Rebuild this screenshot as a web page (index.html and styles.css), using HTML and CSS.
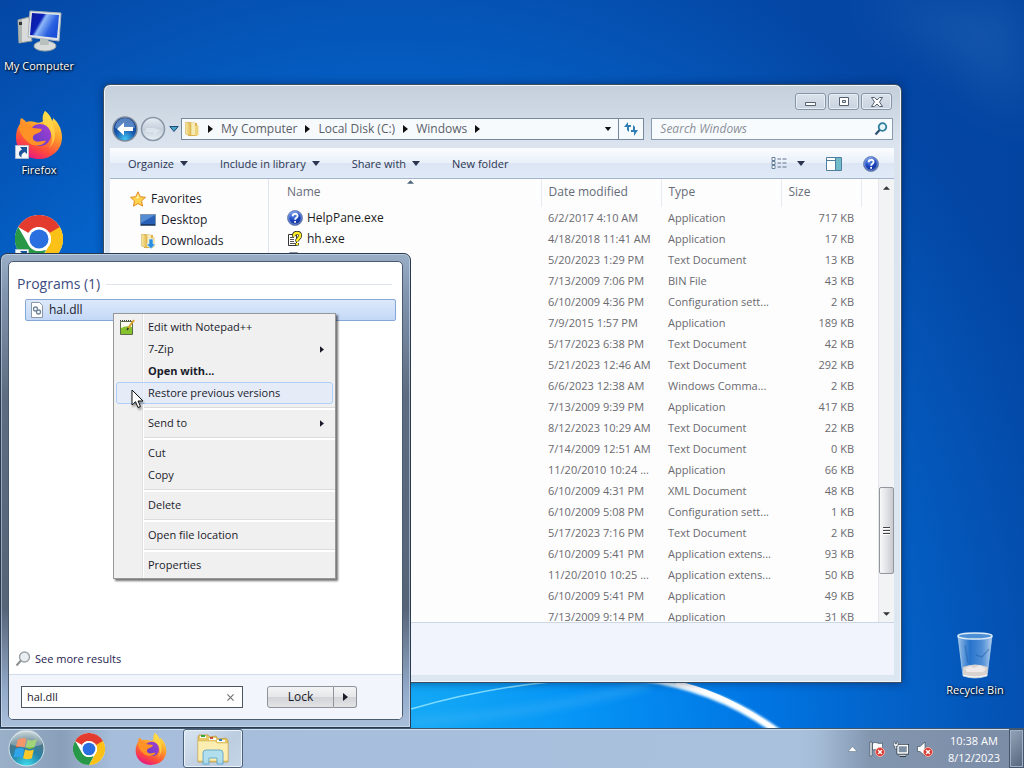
FILE: index.html
```html
<!DOCTYPE html>
<html lang="en">
<head>
<meta charset="utf-8">
<title>Desktop</title>
<link rel="stylesheet" href="styles.css">
</head>
<body class="desktop">
<svg class="sprite" aria-hidden="true">
  <defs>
    <linearGradient id="g-fire" x1="0.8" y1="0" x2="0.3" y2="1"><stop offset="0" stop-color="#fff14f"/><stop offset=".4" stop-color="#ffa02a"/><stop offset=".75" stop-color="#ff4a3c"/><stop offset="1" stop-color="#e31587"/></linearGradient>
    <linearGradient id="g-violet" x1="0" y1="1" x2="1" y2="0"><stop offset="0" stop-color="#5a3bc8"/><stop offset="1" stop-color="#a63fd0"/></linearGradient>
    <linearGradient id="g-screen" x1="0" y1="0" x2="1" y2=".5"><stop offset="0" stop-color="#0a1a9c"/><stop offset=".4" stop-color="#0c22b8"/><stop offset=".5" stop-color="#8fb8f8"/><stop offset=".8" stop-color="#2c62e0"/><stop offset="1" stop-color="#1c50d8"/></linearGradient>
    <linearGradient id="g-folder" x1="0" y1="0" x2="1" y2="0"><stop offset="0" stop-color="#f8e9a4"/><stop offset="1" stop-color="#e2b94c"/></linearGradient>
    <radialGradient id="g-help" cx=".4" cy=".25" r=".8"><stop offset="0" stop-color="#6f9cf0"/><stop offset=".5" stop-color="#1c46c0"/><stop offset="1" stop-color="#0c2680"/></radialGradient>
    <radialGradient id="g-back" cx=".5" cy=".9" r=".9"><stop offset="0" stop-color="#3fc4f4"/><stop offset=".45" stop-color="#1a5cb0"/><stop offset="1" stop-color="#123a86"/></radialGradient>
    <linearGradient id="g-fwd" x1="0" y1="0" x2="0" y2="1"><stop offset="0" stop-color="#e6edf4"/><stop offset=".5" stop-color="#c6d0dc"/><stop offset="1" stop-color="#e8eff6"/></linearGradient>
    <radialGradient id="g-orb" cx=".5" cy="1" r="1"><stop offset="0" stop-color="#3ce0f0"/><stop offset=".45" stop-color="#2784a8"/><stop offset=".75" stop-color="#4f7688"/><stop offset="1" stop-color="#b6c9cc"/></radialGradient>
    <linearGradient id="g-bin" x1="0" y1="0" x2="1" y2="0"><stop offset="0" stop-color="#cfe4f8" stop-opacity=".75"/><stop offset=".35" stop-color="#3f87d8" stop-opacity=".6"/><stop offset=".7" stop-color="#7fb2ea" stop-opacity=".6"/><stop offset="1" stop-color="#e0eefb" stop-opacity=".8"/></linearGradient>
    <symbol id="firefox" viewBox="0 0 48 48">
      <path fill="url(#g-fire)" d="M30 0c4 3 6 6 7 10 1-1 1-2 1-3 6 5 9 12 9 20a23 21 0 0 1-23 21C11 48 1 39 1 27c0-6 1-10 4-14 0-2 0-4 1-6 2 1 4 2 5 4 3-1 6-1 9 0 3 1 6 1 8-1-1-4 0-7 2-10z"/>
      <path fill="#ffd94a" d="M30 0c5 4 7 8 8 14 4 8 2 18-4 23 6-8 3-17-3-21-4-4-4-10-1-16z" opacity=".75"/>
      <circle cx="25" cy="24" r="11" fill="url(#g-violet)"/>
      <path fill="#ff9226" d="M4 14c5-2 10-1 14 3l9 1c-1 4-5 4-8 6-2 2-1 5 1 6 4 2 7-1 11 0-4 6-14 6-19 0C7 26 4 20 4 14z"/>
    </symbol>
    <symbol id="chrome" viewBox="0 0 48 48">
      <circle cx="24" cy="24" r="24" fill="#fff"/>
      <path fill="#e33b2e" d="M3.200 12A24 24 0 0 1 44.800 12H24a12 12 0 0 0-10.400 6z"/>
      <path fill="#fbc116" d="M44.800 12A24 24 0 0 1 24 48L34.400 30A12 12 0 0 0 34.400 18L31 12z"/>
      <path fill="#279847" d="M24 48A24 24 0 0 1 3.200 12L13.600 30A12 12 0 0 0 24 36l7-1z"/>
      <path fill="#e33b2e" d="M24 12h20.800L34.400 18z"/>
      <circle cx="24" cy="24" r="12" fill="#fff"/>
      <circle cx="24" cy="24" r="9.500" fill="#2a6fe0"/>
    </symbol>
    <symbol id="shortcut" viewBox="0 0 14 14"><path fill="#f4f7fa" stroke="#a8b4c0" stroke-width=".6" d="M.3.300h13.400v13.400H.3z"/><path fill="#1c5398" d="M5 2h7v7L9.800 7C7 8 6 10 6.500 12.500 2.500 10 3.500 6 7 4.400z"/></symbol>
    <symbol id="help" viewBox="0 0 16 16"><circle cx="8" cy="8" r="7.500" fill="url(#g-help)" stroke="#7b8fb8"/><circle cx="8" cy="8" r="6.300" fill="none" stroke="#a9c0ef" stroke-width=".7"/><path fill="none" stroke="#fff" stroke-width="1.800" d="M5.600 6.200C5.600 3 10.600 3 10.600 6c0 1.800-2.500 1.800-2.500 3.800M8.100 11v1.800"/></symbol>
    <symbol id="doc" viewBox="0 0 16 16"><path fill="#fff" stroke="#8995a0" d="M2.500.500h8l3 3v12h-11z"/><path stroke="#9ab" d="M5 6h6M5 8h6M5 10h6"/></symbol>
    <symbol id="down" viewBox="0 0 8 5"><path fill="currentColor" d="M0 0h8L4 5z"/></symbol>
    <symbol id="right" viewBox="0 0 5 8"><path fill="currentColor" d="M0 0v8l5-4z"/></symbol>
    <symbol id="folder" viewBox="0 0 16 16"><path fill="#d9b24f" d="M4 1l9 1v13H4z"/><path fill="#f7ebb5" d="M6 2h5v12H6z"/><path fill="url(#g-folder)" stroke="#cfa94c" stroke-width=".5" d="M1.500 1L7 2.500V15l-5.500-2z"/><path fill="#eed27c" d="M11 5l3.500-1v10L11 15z"/></symbol>
    <symbol id="badge-x" viewBox="0 0 10 10"><circle cx="5" cy="5" r="4.500" fill="#d8342c" stroke="#f2b6b0"/><path stroke="#fff" stroke-width="1.500" d="M3 3l4 4M7 3L3 7"/></symbol>
  </defs>
</svg>

<main class="workspace">
  <svg class="wallpaper" viewBox="0 0 1024 728" preserveAspectRatio="none" aria-hidden="true">
    <defs><filter id="soft" x="-10%" y="-30%" width="120%" height="160%"><feGaussianBlur stdDeviation="1.200"/></filter><filter id="haze" x="-20%" y="-50%" width="140%" height="200%"><feGaussianBlur stdDeviation="4"/></filter><filter id="glow" x="-50%" y="-80%" width="200%" height="260%"><feGaussianBlur stdDeviation="24"/></filter></defs>
    <path d="M860 0L1024 0V120Q960 60 860 0z" fill="#3a78c0" opacity=".3" filter="url(#glow)"/>
    <path d="M411 722Q540 714 650 684" fill="none" stroke="#4ab4f8" stroke-width="6" opacity=".5" filter="url(#haze)"/>
    <path d="M411 709Q480 689 550 682" fill="none" stroke="#7fdcff" stroke-width="1.500"/>
    <path d="M640 679Q716 683 780 730L770 730Q714 690 640 680z" fill="#fff" stroke="#d8f2ff" stroke-width="2" filter="url(#soft)"/>
    <path d="M676 683Q722 692 774 729" fill="none" stroke="#fff" stroke-width="4"/>
  </svg>

  <nav class="shortcuts" aria-label="Desktop icons">
    <a class="shortcut" href="#"><svg class="shortcut-icon" viewBox="0 0 48 48"><path fill="#d9dcda" stroke="#8d9696" d="M3 13l11-3 3 24-13 2z"/><path fill="#aeb5b3" d="M3 13l4-1v23l-3 1z"/><path fill="#333" d="M4 15h3v3H4z"/><ellipse cx="30" cy="39" rx="11" ry="5" fill="#d8dcda" stroke="#a0a8a6"/><path fill="#b9c0be" d="M25 31h8l1 7h-9z"/><path fill="#dfe5e8" stroke="#aab4ba" d="M15 4l31 2-2 28-31-4z"/><path fill="url(#g-screen)" d="M17 6l27 2-2 23-27-3z"/></svg><span>My Computer</span></a>
    <a class="shortcut" href="#"><span class="icon-box"><svg class="shortcut-icon"><use href="#firefox"/></svg><svg class="overlay"><use href="#shortcut"/></svg></span><span>Firefox</span></a>
    <a class="shortcut" href="#" aria-label="Chrome"><span class="icon-box"><svg class="shortcut-icon"><use href="#chrome"/></svg><svg class="overlay"><use href="#shortcut"/></svg></span></a>
  </nav>
  <a class="shortcut recycle" href="#"><svg class="shortcut-icon" viewBox="0 0 48 48"><path fill="url(#g-bin)" stroke="#a9c9ea" stroke-width=".8" d="M7 5h34l-5 40q-12 4-24 0z"/><path fill="#d9d3d0" d="M12 36q12-5 25 0l-1 9q-12 4-24 0z"/><path fill="#eee9e8" d="M14 38l5-3 4 2 6-3 6 4-3 3H16z"/><ellipse cx="24" cy="5" rx="17" ry="3" fill="#4d8fd4" stroke="#dcebf8" stroke-width="1.500"/><path fill="none" stroke="#1a559f" stroke-width="1.500" d="M38 18l-7 8-6-2M14 14l3 18" opacity=".4"/><path fill="none" stroke="#f4faff" d="M12 44q12 4 24 0"/></svg><span>Recycle Bin</span></a>

  <section class="explorer" aria-label="Windows folder">
    <header class="caption">
      <button class="cap-btn" aria-label="Minimize"><svg width="12" height="12" viewBox="0 0 12 12"><path fill="#fff" stroke="#546070" d="M.5 6.500h10v3H.5z"/></svg></button>
      <button class="cap-btn" aria-label="Maximize"><svg width="12" height="12" viewBox="0 0 12 12"><path fill="#fff" stroke="#546070" d="M1.500 1.500h9v8h-9z"/><path fill="#dbe3ec" stroke="#546070" d="M4.500 4.500h3v2h-3z"/></svg></button>
      <button class="cap-btn" aria-label="Close"><svg width="12" height="12" viewBox="0 0 12 12"><path fill="#fff" stroke="#546070" d="M.5 1.500h3L6 4l2.500-2.500h3L8.500 6l3 4.500h-3L6 8l-2.500 2.500h-3L3.500 6z"/></svg></button>
    </header>
    <div class="navbar">
      <div class="travel">
        <button class="round" aria-label="Back"><svg viewBox="0 0 26 26"><circle cx="13" cy="13" r="12" fill="url(#g-back)" stroke="#7d8a9a" stroke-width="1.500"/><path fill="#8fb6e4" opacity=".55" d="M3 12a10 10 0 0 1 20 0q-10 3-20 0z"/><path fill="#fff" d="M5 13l7-6.500V11h9v4h-9v4.500z"/></svg></button>
        <button class="round" aria-label="Forward"><svg viewBox="0 0 26 26"><circle cx="13" cy="13" r="11.500" fill="url(#g-fwd)" stroke="#8896a6" stroke-width="1.500"/><path fill="#eef4fa" d="M20 14l-6 5v-3H6v-4h8z" opacity=".5"/></svg></button>
        <button class="plain recent" aria-label="Recent pages"><svg width="10" height="6" viewBox="0 0 10 6"><path fill="#4ca3c8" stroke="#1f4c78" d="M.8.500h8.400L5 5.500z"/></svg></button>
      </div>
      <div class="address">
        <svg class="i16"><use href="#folder"/></svg>
        <svg class="sep"><use href="#right"/></svg><a href="#">My Computer</a>
        <svg class="sep"><use href="#right"/></svg><a href="#">Local Disk (C:)</a>
        <svg class="sep"><use href="#right"/></svg><a href="#">Windows</a>
        <svg class="sep"><use href="#right"/></svg>
        <button class="plain history" aria-label="Previous locations"><svg class="arrow"><use href="#down"/></svg></button>
        <button class="plain refresh" aria-label="Refresh"><svg width="16" height="16" viewBox="0 0 16 16"><path fill="#2f7fb4" d="M1 6l4-5v3h3v2H6v5L4 9V6zM15 9l-4 6v-4H8V9h2V4l2 2v3z"/></svg></button>
      </div>
      <div class="find"><input type="search" aria-label="Search Windows" placeholder="Search Windows"><svg width="14" height="14" viewBox="0 0 14 14"><circle cx="8.500" cy="5" r="3.800" fill="#e8f6fb" stroke="#2d7f9c" stroke-width="1.800"/><path stroke="#2a4f70" stroke-width="2.200" d="M5.600 8L1.500 12.500"/></svg></div>
    </div>
    <div class="toolbar">
      <button class="plain">Organize <svg class="arrow"><use href="#down"/></svg></button>
      <button class="plain">Include in library <svg class="arrow"><use href="#down"/></svg></button>
      <button class="plain">Share with <svg class="arrow"><use href="#down"/></svg></button>
      <button class="plain">New folder</button>
      <div class="tools">
        <button class="plain" aria-label="Change view"><svg width="16" height="13" viewBox="0 0 16 13"><path fill="#fff" stroke="#66809c" d="M1 .5h3v3H1zM1 4.500h3v3H1zM1 8.500h3v3H1z"/><path stroke="#61738c" d="M6.500 2h3.500M11.500 2h4M6.500 6h3.500M11.500 6h4M6.500 10h3.500M11.500 10h4"/></svg><svg class="arrow"><use href="#down"/></svg></button>
        <button class="plain" aria-label="Preview pane"><svg width="16" height="14" viewBox="0 0 16 14"><path fill="#fff" stroke="#4f7fa0" d="M.5.500h15v13H.5z"/><path fill="#71bcc8" d="M10 1h5v12h-5z"/><path stroke="#4f7fa0" d="M1 3.500h9M9.500 1v12"/></svg></button>
        <button class="plain" aria-label="Help"><svg class="i16"><use href="#help"/></svg></button>
      </div>
    </div>
    <div class="content">
      <nav class="tree" aria-label="Folders">
        <a href="#"><svg class="i16" viewBox="0 0 16 16"><path fill="#ffd34e" stroke="#e18b22" d="M8 .8l2.200 4.900 5.300.6-4 3.600 1.100 5.200L8 12.500l-4.600 2.600 1.100-5.200-4-3.600 5.300-.6z"/><path fill="#fff0ab" d="M8 3l1.300 3.600L6 8z"/></svg>Favorites</a>
        <a class="child" href="#"><svg class="i16" viewBox="0 0 16 16"><path fill="#2860b8" stroke="#7c94ad" d="M.5 2.500h15v11H.5z"/><path fill="#75aae6" d="M1 3h14L1 11z" opacity=".6"/><path fill="#1d3a66" d="M1 12h14v1.500H1z"/></svg>Desktop</a>
        <a class="child" href="#"><svg class="i16"><use href="#folder"/><path fill="#2a8fe0" stroke="#eaf5ff" stroke-width=".6" d="M9 6h4v5h2.500L11 15.700 6.500 11H9z"/></svg>Downloads</a>
      </nav>
      <div class="files">
        <table>
          <colgroup><col><col class="c-date"><col class="c-type"><col class="c-size"><col class="c-rest"></colgroup>
          <thead><tr><th>Name<svg class="sorted" viewBox="0 0 8 4"><path fill="#4d6478" d="M4 0l4 4H0z"/></svg></th><th>Date modified</th><th>Type</th><th>Size</th><th></th></tr></thead>
          <tbody>
            <tr><td><span class="file"><svg class="i16"><use href="#help"/></svg>HelpPane.exe</span></td><td>6/2/2017 4:10 AM</td><td>Application</td><td>717 KB</td><td></td></tr>
            <tr><td><span class="file"><svg class="i16" viewBox="0 0 16 16"><path fill="#fff" stroke="#333" d="M1.500 3.500h8v11h-8z"/><path stroke="#555" d="M3 6.500h4M3 8.500h4M3 10.500h4M3 12.500h5"/><path fill="none" stroke="#333" stroke-width="4" d="M7 5.500C6 .5 14 .5 13 5c0 2.500-3 2-3 5.500M10 12v2.500"/><path fill="none" stroke="#ffed24" stroke-width="2.500" d="M7 5.500C6 .8 14 .8 13 5c0 2.500-3 2-3 5.500M10 12v2"/></svg>hh.exe</span></td><td>4/18/2018 11:41 AM</td><td>Application</td><td>17 KB</td><td></td></tr>
            <tr><td><span class="file"><svg class="i16"><use href="#doc"/></svg></span></td><td>5/20/2023 1:29 PM</td><td>Text Document</td><td>13 KB</td><td></td></tr>
            <tr><td></td><td>7/13/2009 7:06 PM</td><td>BIN File</td><td>43 KB</td><td></td></tr>
            <tr><td></td><td>6/10/2009 4:36 PM</td><td>Configuration sett...</td><td>2 KB</td><td></td></tr>
            <tr><td></td><td>7/9/2015 1:57 PM</td><td>Application</td><td>189 KB</td><td></td></tr>
            <tr><td></td><td>5/17/2023 6:38 PM</td><td>Text Document</td><td>42 KB</td><td></td></tr>
            <tr><td></td><td>5/21/2023 12:46 AM</td><td>Text Document</td><td>292 KB</td><td></td></tr>
            <tr><td></td><td>6/6/2023 12:38 AM</td><td>Windows Comma...</td><td>2 KB</td><td></td></tr>
            <tr><td></td><td>7/13/2009 9:39 PM</td><td>Application</td><td>417 KB</td><td></td></tr>
            <tr><td></td><td>8/12/2023 10:29 AM</td><td>Text Document</td><td>22 KB</td><td></td></tr>
            <tr><td></td><td>7/14/2009 12:51 AM</td><td>Text Document</td><td>0 KB</td><td></td></tr>
            <tr><td></td><td>11/20/2010 10:24 ...</td><td>Application</td><td>66 KB</td><td></td></tr>
            <tr><td></td><td>6/10/2009 4:31 PM</td><td>XML Document</td><td>48 KB</td><td></td></tr>
            <tr><td></td><td>6/10/2009 5:08 PM</td><td>Configuration sett...</td><td>1 KB</td><td></td></tr>
            <tr><td></td><td>5/17/2023 7:16 PM</td><td>Text Document</td><td>2 KB</td><td></td></tr>
            <tr><td></td><td>6/10/2009 5:41 PM</td><td>Application extens...</td><td>93 KB</td><td></td></tr>
            <tr><td></td><td>11/20/2010 10:25 ...</td><td>Application extens...</td><td>50 KB</td><td></td></tr>
            <tr><td></td><td>6/10/2009 5:41 PM</td><td>Application</td><td>49 KB</td><td></td></tr>
            <tr><td></td><td>7/13/2009 9:14 PM</td><td>Application</td><td>31 KB</td><td></td></tr>
          </tbody>
        </table>
      </div>
      <div class="scrollbar">
        <button class="plain" aria-label="Scroll up"><svg width="7" height="4" viewBox="0 0 8 4"><path fill="#333" d="M4 0l4 4H0z"/></svg></button>
        <div class="track"><div class="thumb"><i></i><i></i><i></i></div></div>
        <button class="plain" aria-label="Scroll down"><svg width="7" height="4" viewBox="0 0 8 4"><path fill="#333" d="M0 0h8L4 4z"/></svg></button>
      </div>
    </div>
    <div class="details"></div>
  </section>

  <section class="start" aria-label="Start menu">
    <div class="panel">
      <div class="results">
        <h2>Programs (1)</h2>
        <a class="result" href="#"><svg class="i16" viewBox="0 0 16 16"><path fill="#fff" stroke="#8a97a6" d="M2.500.500h8l3 3v12h-11z"/><circle cx="6.500" cy="7" r="2" fill="none" stroke="#6f8499" stroke-width="1.300"/><circle cx="9.500" cy="10" r="2" fill="none" stroke="#6f8499" stroke-width="1.300"/></svg>hal.dll</a>
      </div>
      <a class="more" href="#"><svg class="i16" viewBox="0 0 16 16"><circle cx="9.500" cy="6" r="5" fill="#e9eef2" stroke="#9aa2a8" stroke-width="1.400"/><path stroke="#8a8f92" stroke-width="2" d="M6 9.500L1.500 14.500"/></svg>See more results</a>
      <div class="start-foot">
        <div class="query"><input type="text" value="hal.dll" aria-label="Search programs and files"><button class="plain" aria-label="Clear"><svg width="7" height="7" viewBox="0 0 8 8"><path stroke="#777" stroke-width="1.400" d="M.5.500l7 7M7.500.500l-7 7"/></svg></button></div>
        <div class="power"><button>Lock</button><button class="power-more" aria-label="Shut down options"><svg class="sep"><use href="#right"/></svg></button></div>
      </div>
    </div>
  </section>

  <ul class="menu" role="menu">
    <li><button role="menuitem"><svg class="i16" viewBox="0 0 16 16"><path fill="#fbfdf4" stroke="#5d6b4c" d="M1.500 2.500h12v13h-12z"/><path fill="#86c22c" d="M2 9q5-3 11-1v7H2z"/><path stroke="#444" stroke-dasharray="1 1" d="M1 1.500h12"/><path stroke="#d8a02c" stroke-width="2" d="M15 1L8.500 10"/><path stroke="#333" stroke-width="1.500" d="M9.300 9L8 11"/></svg><span>Edit with Notepad++</span></button></li>
    <li><button role="menuitem"><span>7-Zip</span><svg class="submenu"><use href="#right"/></svg></button></li>
    <li><button role="menuitem" class="default"><span>Open with...</span></button></li>
    <li><button role="menuitem" class="hot"><span>Restore previous versions</span></button></li>
    <li class="rule" role="separator"></li>
    <li><button role="menuitem"><span>Send to</span><svg class="submenu"><use href="#right"/></svg></button></li>
    <li class="rule" role="separator"></li>
    <li><button role="menuitem"><span>Cut</span></button></li>
    <li><button role="menuitem"><span>Copy</span></button></li>
    <li class="rule" role="separator"></li>
    <li><button role="menuitem"><span>Delete</span></button></li>
    <li class="rule" role="separator"></li>
    <li><button role="menuitem"><span>Open file location</span></button></li>
    <li class="rule" role="separator"></li>
    <li><button role="menuitem"><span>Properties</span></button></li>
  </ul>
  <svg class="cursor" viewBox="0 0 13 20" aria-hidden="true"><path fill="#fff" stroke="#111" d="M1 1v15l3.500-3.300L7 18.500l2.500-1L7 12h5z"/></svg>
</main>

<footer class="taskbar">
  <button class="orb" aria-label="Start"><svg viewBox="0 0 38 38"><circle cx="19" cy="19" r="18" fill="url(#g-orb)" stroke="#d6e6ea"/><path fill="#f0672a" d="M10 10q5-3 9-1l-2 9q-4-2-9 0z"/><path fill="#7cc043" d="M20 10q5 2 10-1l-3 9q-5 3-9 0z"/><path fill="#2fa4e8" d="M7.500 19.500q5-2 9 0l-2 9q-4-2-9 0z"/><path fill="#fcc82a" d="M17.500 20q5 2 9 0l-2 9q-5 2-9 0z"/><path fill="#fff" opacity=".3" d="M3 15a16 16 0 0 1 32 0q-16 6-32 0z"/></svg></button>
  <button class="task" aria-label="Chrome"><svg class="i32"><use href="#chrome"/></svg></button>
  <button class="task" aria-label="Firefox"><svg class="i32"><use href="#firefox"/></svg></button>
  <button class="task active" aria-label="Windows Explorer"><svg class="i34" viewBox="0 0 34 34"><path fill="#e6c766" stroke="#b8963c" stroke-width=".7" d="M2 5l1-2h9l2 2 6-1 2 3 8-1 2 2v22H2z"/><path fill="#fff" d="M4 4h6v2H4zM13 6h7v2h-7zM21 8h8v2h-8z"/><path fill="#36a636" d="M5 3h4v2H5z"/><path fill="#cf4a2a" d="M14 5h3v2h-3z"/><path fill="#3a7ab8" d="M23 7h3v2h-3z"/><path fill="#fbeeb0" stroke="#d6b75e" stroke-width=".6" d="M2 9h17l2 2h11v18H2z"/><path fill="#a9def4" stroke="#5aa4cc" d="M7 32V21q0-3 3-3h14q3 0 3 3v11h-6v-6h-8v6z" opacity=".9"/></svg></button>
  <div class="tray">
    <button class="plain" aria-label="Show hidden icons"><svg width="9" height="6" viewBox="0 0 9 6"><path fill="#fff" stroke="#5b6a7c" stroke-width=".5" d="M4.500.500L9 5.500H0z"/></svg></button>
    <button class="plain" aria-label="Action Center"><svg class="i16" viewBox="0 0 16 16"><path fill="#fff" stroke="#30404f" stroke-width=".6" d="M1 1h2v14H1zM3.500 2q3-1 5 0t5 0v7q-3 1-5 0t-5 0z"/><use href="#badge-x" x="6" y="6" width="10" height="10"/></svg></button>
    <button class="plain" aria-label="Network"><svg class="i16" viewBox="0 0 16 16"><path fill="none" stroke="#2e3c4a" stroke-width="3" d="M5 4.500h9.500v7.500H5zM7 14.500h6"/><path fill="#7e90a4" stroke="#fff" stroke-width="1.400" d="M5 4.500h9.500v7.500H5z"/><path fill="#fff" stroke="#2e3c4a" stroke-width=".5" d="M.5 1h1.500v2h1.500V1H5v4H3.500v3H2V5H.5zM6 13.500h7V15H6z"/></svg></button>
    <button class="plain" aria-label="Volume muted"><svg class="i16" viewBox="0 0 16 16"><path fill="#fff" stroke="#30404f" stroke-width=".6" d="M.5 5.500H3L8 1v14l-5-4.500H.5z"/><use href="#badge-x" x="6" y="6" width="10" height="10"/></svg></button>
    <div class="clock"><time>10:38 AM</time><time>8/12/2023</time></div>
  </div>
  <button class="peek" aria-label="Show desktop"></button>
</footer>
</body>
</html>
```

FILE: styles.css
```css
* { box-sizing: border-box; }

body.desktop {
  margin: 0;
  height: 100vh;
  display: flex;
  flex-direction: column;
  overflow: hidden;
  font: 11px/16px "Open Sans", "Noto Sans", sans-serif;
  color: #1b1b2b;
  background:
    linear-gradient(90deg, transparent 75%, rgba(0, 60, 150, .25) 100%),
    radial-gradient(ellipse 75% 115% at 38% 100%, #19b0f5 0%, #0695f6 25%, #0076e4 48%, #0562c8 72%, #0447a5 100%);
}

a { color: inherit; text-decoration: none; }
button, input { font: inherit; color: inherit; margin: 0; }
svg { display: block; flex: none; }
.sprite { position: absolute; width: 0; height: 0; }
.plain { display: flex; align-items: center; border: 0; padding: 0; background: none; }
.i16 { width: 16px; height: 16px; }
.i32 { width: 32px; height: 32px; }
.i34 { width: 34px; height: 34px; }
.arrow { width: 8px; height: 5px; }
.sep { width: 5px; height: 8px; }
.submenu { width: 4px; height: 7px; }

.workspace { position: relative; flex: 1; min-height: 0; }
.wallpaper { position: absolute; inset: 0; width: 100%; height: 100%; }

/* Desktop icons */
.shortcuts { position: absolute; left: 0; top: 7px; display: flex; flex-direction: column; gap: 37px; width: 78px; }
.shortcut { display: flex; flex-direction: column; align-items: center; gap: 2px; line-height: 17px; color: #fff; text-shadow: 1px 1px 2px #000, 0 0 3px #012; white-space: nowrap; }
.shortcut-icon { display: block; width: 48px; height: 48px; }
.icon-box { position: relative; }
.overlay { position: absolute; left: 0; bottom: 0; width: 14px; height: 14px; }
.recycle { position: absolute; right: 9px; bottom: 30px; width: 80px; }

/* Explorer window */
.explorer {
  position: absolute; left: 103px; right: 122px; top: 84px; bottom: 45px;
  display: flex; flex-direction: column;
  padding: 0 7px 7px 6px;
  border: 1px solid #3c4d60;
  border-radius: 7px 7px 0 0;
  background: linear-gradient(#c4cfdb, #dbe4ee 60px, #dde7f1);
  box-shadow: inset 0 0 0 1px #f1f6fb, 0 0 8px rgba(0, 20, 60, .5);
}
.caption { display: flex; justify-content: flex-end; gap: 2px; padding: 8px 2px 7px; }
.cap-btn { display: flex; align-items: center; justify-content: center; width: 31px; height: 17px; padding: 0; border: 1px solid #8794a6; border-radius: 3px; background: linear-gradient(#dbe3ec, #c8d2de); box-shadow: inset 0 0 0 1px #e8eef5; }
.navbar { display: flex; align-items: center; height: 24px; margin: 0 1px 7px 2px; }
.travel { display: flex; align-items: center; gap: 2px; margin-right: 1px; }
.round { border: 0; padding: 0; background: none; }
.round svg { width: 26px; height: 26px; }
.recent { margin: 0 1px; }
.address { display: flex; align-items: center; gap: 8px; flex: 460 1 0; height: 22px; margin-right: 7px; padding-left: 2px; border: 1px solid #76889c; background: #f7fafd; color: #5a5f68; font-size: 12px; }
.history { margin-left: auto; margin-right: -2px; color: #111; }
.address .sep { color: #111; }
.address .arrow { height: 4px; }
.refresh { height: 100%; padding: 0 4px; border-left: 1px solid #76889c; }
.find { display: flex; align-items: center; flex: 228 1 0; height: 22px; padding: 0 4px 0 8px; border: 1px solid #8a9bb0; background: #f8fbfe; }
.find input { flex: 1; min-width: 0; padding: 0; border: 0; outline: 0; background: none; font-size: 12px; }
.find input::placeholder { color: #8b9097; font-style: italic; opacity: 1; }
.toolbar { display: flex; align-items: center; gap: 32px; height: 31px; padding: 0 15px 0 18px; border-top: 1px solid #f8fbff; border-bottom: 1px solid #a4b4cc; background: linear-gradient(#fafcff, #e9f0fa 48%, #dbe5f4 50%, #e1eaf7); color: #2b3550; }
.toolbar .plain { gap: 6px; }
.tools { display: flex; align-items: center; gap: 21px; margin-left: auto; }
.tools .plain { gap: 10px; }
.content { display: flex; flex: 1; min-height: 0; background: #fdfdfe; }
.tree { width: 159px; flex: none; padding: 9px 0 0 20px; border-right: 1px solid #dfe6f0; font-size: 12px; }
.tree a { display: flex; align-items: center; gap: 5px; height: 21px; }
.tree .child { padding-left: 10px; }
.files { flex: 1; min-width: 0; overflow: hidden; }
table { width: 100%; table-layout: fixed; border-collapse: collapse; color: #6a6a6e; }
.c-date, .c-type { width: 120px; }
.c-size { width: 80px; }
.c-rest { width: 17px; }
th { position: relative; height: 28px; padding: 0 0 3px 7px; border-right: 1px solid #e6ebf2; text-align: left; font-weight: 400; font-size: 12px; color: #666c76; }
th:first-child, td:first-child { padding-left: 18px; }
th:last-child { border-right: 0; }
.sorted { position: absolute; left: 138px; top: 1px; width: 7px; height: 4px; }
td { height: 21px; padding: 0 0 0 7px; white-space: nowrap; }
td:nth-child(4) { padding-right: 7px; text-align: right; }
.file { display: flex; align-items: center; gap: 4px; font-size: 12px; color: #1e1e1e; }
.scrollbar { display: flex; flex-direction: column; width: 16px; flex: none; border-left: 1px solid #e4e6e9; background: #f2f3f5; }
.scrollbar > .plain { justify-content: center; height: 17px; }
.track { display: flex; flex-direction: column; justify-content: flex-end; flex: 1; padding-bottom: 31px; }
.thumb { display: flex; flex-direction: column; align-items: center; justify-content: center; gap: 1px; height: 87px; border: 1px solid #93979d; border-radius: 2px; background: linear-gradient(90deg, #f8f8f9, #e2e3e6 50%, #c8cacf); }
.thumb i { width: 7px; height: 2px; border-top: 1px solid #444; background: #fff; }
.details { height: 53px; border-top: 1px solid #ccd7e5; background: #f1f4fd; }

/* Start menu */
.start {
  position: absolute; left: 0; top: 253px; bottom: 0; width: 411px;
  display: flex; padding: 7px;
  border: 1px solid #2a3a50; border-radius: 7px 7px 0 0;
  background: linear-gradient(#9aaec6, #8296b0 8%, #5d6c80 30%, #566478 75%, #92a9c8 92%, #a9bfda);
  box-shadow: inset 0 0 0 1px rgba(220, 235, 250, .5);
}
.panel { display: flex; flex-direction: column; flex: 1; overflow: hidden; border: 1px solid #4a5a70; border-radius: 5px; background: #fff; }
.results { flex: 1; padding: 12px 6px 0 8px; }
h2 { display: flex; align-items: center; gap: 6px; margin: 0 4px 5px 0; font-size: 14px; line-height: 20px; font-weight: 400; color: #3c4c80; }
h2::after { content: ""; flex: 1; height: 1px; background: #dfe4ea; }
.result { display: flex; align-items: center; gap: 4px; height: 22px; margin-left: 8px; padding-left: 3px; border: 1px solid #84a7d6; border-radius: 2px; background: linear-gradient(#dde9fb, #c3d8f7); font-size: 12px; }
.more { display: flex; align-items: center; gap: 4px; padding: 0 0 7px 6px; color: #26214f; }
.start-foot { display: flex; align-items: center; gap: 24px; height: 45px; padding: 0 12px; border-top: 1px solid #d3dbe8; background: #f2f5fc; }
.query { display: flex; align-items: center; width: 222px; height: 22px; padding: 0 8px 0 5px; border: 1px solid #4d5560; background: #fff; }
.query input { flex: 1; min-width: 0; padding: 0; border: 0; outline: 0; background: none; }
.power { display: flex; width: 90px; height: 22px; }
.power button { display: flex; align-items: center; justify-content: center; flex: 1; padding: 0; border: 1px solid #8f949c; border-radius: 3px 0 0 3px; background: linear-gradient(#f4f4f5, #e6e7e9 48%, #d2d4d7 52%, #e2e3e5); font-size: 12px; }
.power .power-more { flex: none; width: 23px; border-left: 0; border-radius: 0 3px 3px 0; }

/* Context menu */
.menu {
  position: absolute; left: 113px; top: 313px; width: 223px;
  margin: 0; padding: 2px; list-style: none;
  border: 1px solid #979797;
  background: linear-gradient(90deg, transparent 28px, #e0e1e2 28px, #e0e1e2 29px, #fff 29px, #fff 30px, transparent 30px) #f0f0f0;
  box-shadow: 2px 2px 2px rgba(0, 0, 0, .55);
}
.menu button { display: flex; align-items: center; width: 100%; height: 22px; padding: 0 8px 0 2px; border: 1px solid transparent; border-radius: 3px; background: none; text-align: left; }
.menu span { flex: 1; padding-left: 29px; }
.menu .i16 + span { padding-left: 13px; }
.menu .default { font-weight: 700; }
.menu .hot { border-color: #aecff7; background: rgba(222, 234, 251, .6); }
.rule { height: 8px; margin-right: -2px; padding: 3px 0 0 28px; }
.rule::before { content: ""; display: block; height: 2px; border-top: 1px solid #dcdcdc; background: #fff; }
.cursor { position: absolute; left: 131px; top: 389px; width: 13px; height: 20px; filter: drop-shadow(1px 2px 1px rgba(0, 0, 0, .4)); }

/* Taskbar */
.taskbar { display: flex; align-items: center; height: 40px; flex: none; border-top: 1px solid #41576e; box-shadow: inset 0 1px 0 #cfdeee; background: linear-gradient(90deg, #9bb0c9, #8a9fb9 6%, #a6bedb 11%, #a9c1dd 78%, #a4bbd6 80%, #8396b0 85%, #7a8ba5); }
.taskbar button { flex: none; }
.orb { width: 57px; padding: 0 0 0 8px; border: 0; background: none; }
.orb svg { width: 37px; height: 37px; }
.task { display: flex; align-items: center; justify-content: center; align-self: stretch; width: 60px; margin-left: 2px; padding: 0; border: 1px solid transparent; background: none; }
.task.active { border-color: #4c6078; border-radius: 3px; background: linear-gradient(135deg, #d9e4f0, #bccde0 60%, #c6d6e8); box-shadow: inset 0 0 0 1px #e9f1f9; }
.tray { display: flex; align-items: center; gap: 8px; margin-left: auto; color: #fff; }
.clock { display: flex; flex-direction: column; align-items: center; margin: 0 9px 0 7px; line-height: 17px; }
.tray .plain:first-child { margin-right: 4px; }
.peek { align-self: stretch; width: 15px; padding: 0; border: 1px solid #46566c; background: linear-gradient(135deg, #93a3b8, #56667d); box-shadow: inset 0 0 0 1px #a0b0c4; }
```
